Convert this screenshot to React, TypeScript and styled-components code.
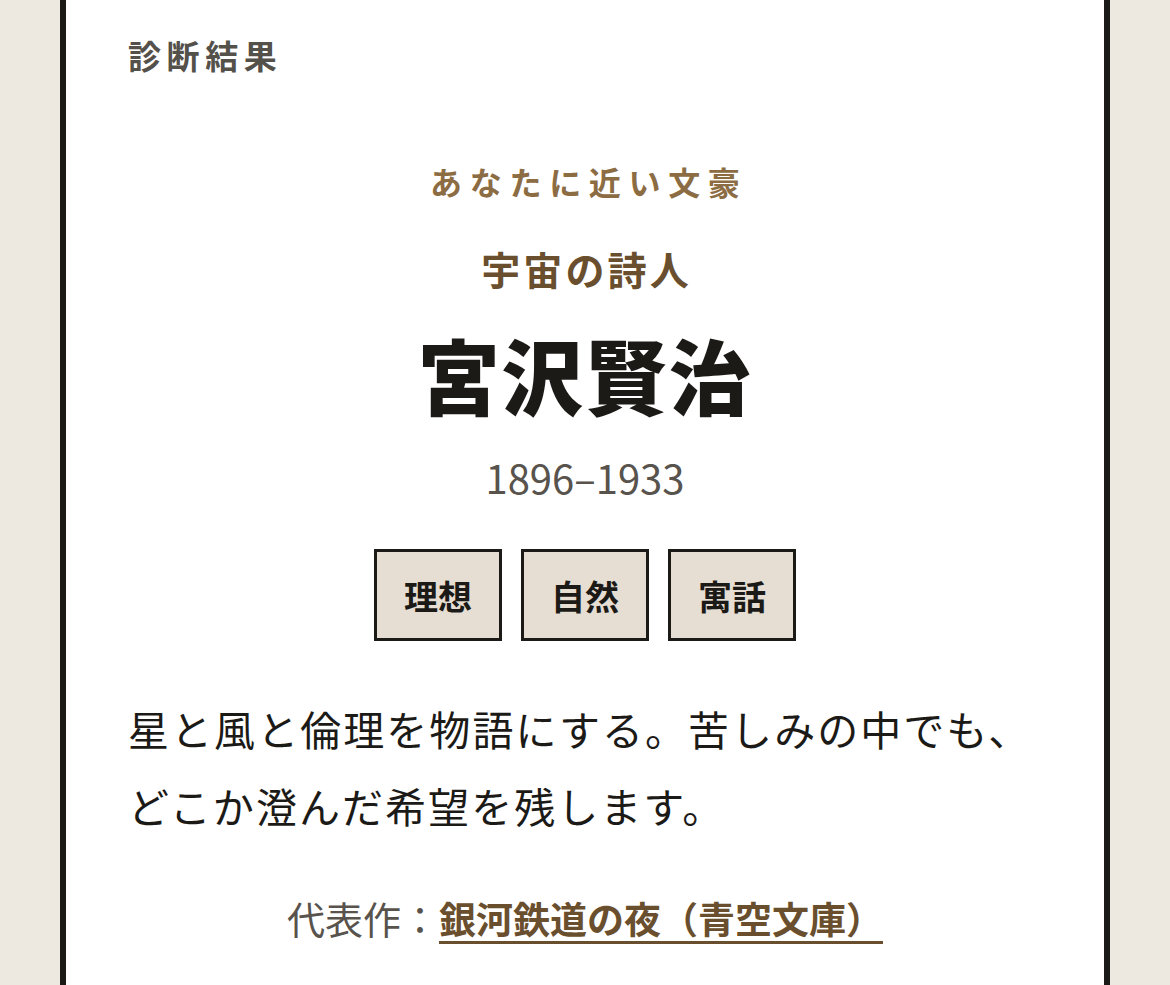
import React from "react";
import styled, {createGlobalStyle} from "styled-components";

const GlobalStyle = createGlobalStyle`
  html, body {
    margin: 0;
    padding: 0;
    background: #EDE9E0;
  }

  body {
    font-family: "Noto Sans CJK JP", "Noto Sans", sans-serif;
    color: #1c1a17;
  }
`;

const Page = styled.main`
  min-height: 985px;
  display: flex;
  justify-content: center;
  overflow: hidden;
`;

const Card = styled.section`
  box-sizing: border-box;
  width: 1050px;
  margin-top: -6px;
  padding: 31px 62px 60px;
  background: #FFFFFF;
  border: 6px solid #1c1a17;
  display: flex;
  flex-direction: column;
`;

const SectionTitle = styled.h2`
  margin: 0;
  font-size: 33px;
  line-height: 48px;
  font-weight: 700;
  letter-spacing: 0.17em;
  color: #54504a;
`;

const Result = styled.div`
  margin-top: 80px;
  display: flex;
  flex-direction: column;
  align-items: center;
  text-align: center;
`;

const Eyebrow = styled.p`
  margin: 0;
  font-size: 32px;
  line-height: 45px;
  font-weight: 700;
  letter-spacing: 0.24em;
  margin-right: -0.24em;
  color: #8c6c43;
`;

const Epithet = styled.p`
  margin: 37px 0 0;
  font-size: 39px;
  line-height: 54px;
  font-weight: 700;
  letter-spacing: 0.08em;
  margin-right: -0.08em;
  color: #6a4f2e;
`;

const Name = styled.h1`
  margin: 31px 0 0;
  font-size: 82px;
  line-height: 96px;
  font-weight: 900;
  letter-spacing: 0.02em;
  color: #1c1a17;
`;

const Years = styled.p`
  margin: 29px 0 0;
  font-size: 40px;
  line-height: 52px;
  font-weight: 400;
  color: #58534c;
`;

const TagList = styled.ul`
  margin: 46px 0 0;
  padding: 0;
  list-style: none;
  display: flex;
  gap: 19px;
`;

const Tag = styled.li`
  box-sizing: border-box;
  width: 128px;
  height: 92px;
  display: flex;
  align-items: center;
  justify-content: center;
  background: #E6DED3;
  border: 3px solid #1c1a17;
  font-size: 34px;
  font-weight: 700;
  color: #1c1a17;
`;

const Description = styled.p`
  margin: 49px 0 0;
  font-size: 41px;
  line-height: 77px;
  font-weight: 400;
  letter-spacing: 0.05em;
  color: #1c1a17;
`;

const WorkLine = styled.p`
  margin: 47px 0 0;
  text-align: center;
  font-size: 37px;
  line-height: 54px;
  color: #58534c;
`;

const WorkLabel = styled.span`
  font-size: 38px;
`;

const WorkLink = styled.a`
  font-weight: 700;
  color: #6a4f2e;
  text-decoration: underline;
  text-decoration-thickness: 3px;
  text-underline-offset: 7px;
`;

const tags = ["理想", "自然", "寓話"];

const App = () => {
    return (
        <>
            <GlobalStyle/>
            <Page>
                <Card>
                    <SectionTitle>診断結果</SectionTitle>
                    <Result>
                        <Eyebrow>あなたに近い文豪</Eyebrow>
                        <Epithet>宇宙の詩人</Epithet>
                        <Name>宮沢賢治</Name>
                        <Years>1896–1933</Years>
                        <TagList>
                            {tags.map((tag) => (
                                <Tag key={tag}>{tag}</Tag>
                            ))}
                        </TagList>
                    </Result>
                    <Description>
                        星と風と倫理を物語にする。苦しみの中でも、どこか澄んだ希望を残します。
                    </Description>
                    <WorkLine>
                        <WorkLabel>代表作：</WorkLabel>
                        <WorkLink href="#">銀河鉄道の夜（青空文庫）</WorkLink>
                    </WorkLine>
                </Card>
            </Page>
        </>
    );
};

export default App;
